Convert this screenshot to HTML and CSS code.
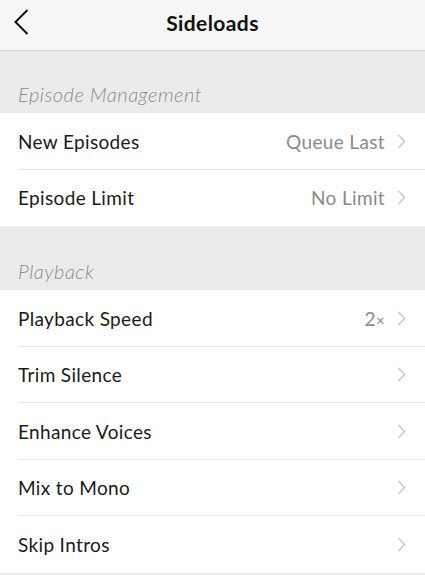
FILE: index.html
```html
<!DOCTYPE html>
<html>
<head>
<meta charset="utf-8">
<link rel="stylesheet" href="styles.css">
</head>
<body>
<header class="nav">
  <svg class="back" width="18" height="28" viewBox="0 0 18 28"><path d="M15.5 2 L3.5 14 L15.5 26" fill="none" stroke="#111" stroke-width="2"/></svg>
  <h1 class="title">Sideloads</h1>
</header>
<section class="group">
  <div class="group-label">Episode Management</div>
  <div class="row"><span class="name">New Episodes</span><span class="value">Queue Last</span><svg class="chev" width="9" height="15" viewBox="0 0 9 15"><path d="M1.5 1 L7.5 7.5 L1.5 14" fill="none" stroke="#c6c6c6" stroke-width="1.4"/></svg></div>
  <div class="row last"><span class="name">Episode Limit</span><span class="value">No Limit</span><svg class="chev" width="9" height="15" viewBox="0 0 9 15"><path d="M1.5 1 L7.5 7.5 L1.5 14" fill="none" stroke="#c6c6c6" stroke-width="1.4"/></svg></div>
</section>
<section class="group group-2">
  <div class="group-label">Playback</div>
  <div class="row"><span class="name">Playback Speed</span><span class="value">2<span class="times">×</span></span><svg class="chev" width="9" height="15" viewBox="0 0 9 15"><path d="M1.5 1 L7.5 7.5 L1.5 14" fill="none" stroke="#c6c6c6" stroke-width="1.4"/></svg></div>
  <div class="row"><span class="name">Trim Silence</span><svg class="chev" width="9" height="15" viewBox="0 0 9 15"><path d="M1.5 1 L7.5 7.5 L1.5 14" fill="none" stroke="#c6c6c6" stroke-width="1.4"/></svg></div>
  <div class="row"><span class="name">Enhance Voices</span><svg class="chev" width="9" height="15" viewBox="0 0 9 15"><path d="M1.5 1 L7.5 7.5 L1.5 14" fill="none" stroke="#c6c6c6" stroke-width="1.4"/></svg></div>
  <div class="row"><span class="name">Mix to Mono</span><svg class="chev" width="9" height="15" viewBox="0 0 9 15"><path d="M1.5 1 L7.5 7.5 L1.5 14" fill="none" stroke="#c6c6c6" stroke-width="1.4"/></svg></div>
  <div class="row last"><span class="name">Skip Intros</span><svg class="chev" width="9" height="15" viewBox="0 0 9 15"><path d="M1.5 1 L7.5 7.5 L1.5 14" fill="none" stroke="#c6c6c6" stroke-width="1.4"/></svg></div>
</section>
</body>
</html>
```
FILE: styles.css
```css
html, body {
  margin: 0;
  padding: 0;
  background: #ebebeb;
  font-family: "Lato", "Open Sans", sans-serif;
  color: #1a1a1a;
}
.nav {
  height: 50px;
  box-sizing: content-box;
  background: #f6f6f6;
  border-bottom: 1px solid #d6d6d6;
  display: flex;
  align-items: center;
  justify-content: center;
  position: relative;
}
.back {
  position: absolute;
  left: 12px;
  top: 8px;
}
.title {
  margin: 0 0 5px;
  font-size: 21px;
  font-weight: 700;
  letter-spacing: 0.4px;
  color: #111;
}
.group-label {
  height: 62px;
  box-sizing: border-box;
  padding: 0 18px 7px;
  display: flex;
  align-items: flex-end;
  font-style: italic;
  font-size: 20px;
  letter-spacing: 0.5px;
  color: #8c8c8c;
  font-weight: 300;
}
.group-2 .group-label {
  height: 64px;
}
.row {
  height: 56.5px;
  box-sizing: border-box;
  background: #fff;
  display: flex;
  align-items: center;
  padding-left: 18px;
  padding-right: 19px;
  position: relative;
  font-size: 19px;
  letter-spacing: 0.35px;
}
.row::after {
  content: "";
  position: absolute;
  left: 18px;
  right: 0;
  bottom: 0;
  height: 1px;
  background: #e6e6e6;
}
.row.last::after {
  display: none;
}
.name {
  flex: 1;
}
.value {
  color: #8a8a8a;
  margin-right: 12px;
}
.times {
  font-size: 15px;
}
.chev {
  display: block;
}
```
